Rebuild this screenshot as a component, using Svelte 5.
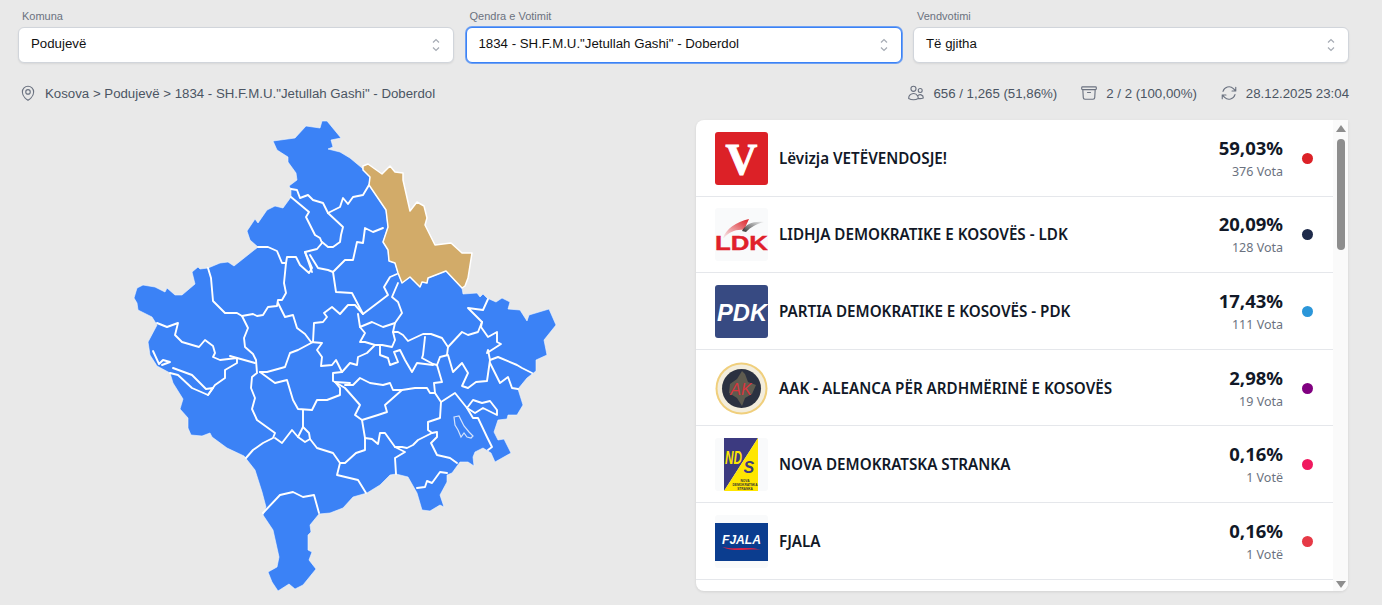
<script>
  const filters = [
    { label: 'Komuna', value: 'Podujevë', focus: false },
    { label: 'Qendra e Votimit', value: '1834 - SH.F.M.U."Jetullah Gashi" - Doberdol', focus: true },
    { label: 'Vendvotimi', value: 'Të gjitha', focus: false }
  ];
  const parties = [
    { id: 'v', name: 'Lëvizja VETËVENDOSJE!', pct: '59,03%', votes: '376 Vota', color: '#dc2127' },
    { id: 'ldk', name: 'LIDHJA DEMOKRATIKE E KOSOVËS - LDK', pct: '20,09%', votes: '128 Vota', color: '#1e2a4a' },
    { id: 'pdk', name: 'PARTIA DEMOKRATIKE E KOSOVËS - PDK', pct: '17,43%', votes: '111 Vota', color: '#2b96d9' },
    { id: 'aak', name: 'AAK - ALEANCA PËR ARDHMËRINË E KOSOVËS', pct: '2,98%', votes: '19 Vota', color: '#800080' },
    { id: 'nds', name: 'NOVA DEMOKRATSKA STRANKA', pct: '0,16%', votes: '1 Votë', color: '#f0195f' },
    { id: 'fjala', name: 'FJALA', pct: '0,16%', votes: '1 Votë', color: '#e63946' }
  ];
  const outline = 'M273 141L295 138L306 126L320 128L322 121L327 121L341 138L331 140L333 147L328 149L340 152L350 158L362 168L370 177L369 185L386 210L388 227L383 242L388 250L389 261L395 263L398 273L402 283L410 277L420 287L422 282L427 283L428 278L446 271L462 288L463 294L477 293L480 297L483 294L487 298L496 302L502 298L510 302L508 309L520 310L527 321L529 315L549 309L556 325L544 340L547 355L536 360L536 371L527 378L518 389L523 405L517 415L508 415L507 419L498 420L494 432L498 440L504 439L511 453L495 462L491 453L483 448L475 452L473 457L474 466L468 462L460 462L452 473L447 475L447 482L440 495L444 507L440 505L430 511L422 510L417 493L408 477L396 474L390 475L380 485L367 493L353 497L343 508L330 513L319 514L310 525L311 532L308 535L308 550L312 552L309 560L316 569L303 585L295 589L289 584L278 591L272 582L268 572L277 567L279 557L273 530L263 515L266 507L262 492L255 470L244 456L227 448L212 437L210 433L202 436L191 435L188 428L188 418L180 409L183 399L173 383L170 373L157 366L150 355L148 342L157 325L152 317L138 310L137 303L134 298L137 288L143 285L155 287L165 292L167 288L175 295L182 295L195 284L192 272L198 267L200 269L208 268L220 263L228 262L234 266L258 247L250 240L247 231L255 219L258 223L267 210L275 206L283 208L291 197L291 189L289 186L297 180L296 173L288 162L288 157L277 150Z';
  const tan = 'M363 166L368 164L382 174L390 166L395 172L403 173L403 180L410 211L417 202L424 206L427 218L425 225L435 245L451 243L462 253L472 253L468 278L465 286L462 288L446 271L428 278L427 283L422 282L420 287L410 277L402 283L398 273L395 263L389 261L388 250L383 242L388 227L386 210L369 185L370 177L363 170Z';
  const borders = [
    'M291 197L309 212L306 217L315 235L320 238L322 243L317 249L305 252L312 272',
    'M258 247L268 247L277 251L282 263L286 263L287 257L296 257L300 265L309 273L312 268L305 252',
    'M286 263L284 283L286 293L282 300L278 300L277 306L268 307L263 315L257 316L253 314L242 316L237 313L225 313L213 301L211 278L208 268',
    'M278 303L285 317L293 315L297 328L305 334L311 342L322 343L317 350L322 357L321 366L332 365L336 360L342 372L333 373L333 381L335 382',
    'M313 342L314 323L323 322L327 317L324 313L332 307L340 314L348 305L355 305L363 314',
    'M242 316L248 328L244 338L245 347L253 354L256 360L257 373L252 377L251 388L255 398L252 409L257 420L275 433L273 438L263 443L253 450L246 458',
    'M157 323L167 327L178 323L175 335L182 342L199 347L205 340L213 346L215 353L213 357L220 360L237 358L237 363L225 370L225 378L215 385L208 395L192 388L178 375L170 373',
    'M162 365L170 362L163 360L159 364L153 351',
    'M173 368L192 375L202 385L206 389L213 388L208 395',
    'M230 356L255 363',
    'M260 372L267 372L285 367L290 353L298 350L313 342',
    'M260 372L275 383L287 380L293 400L298 409L312 410L317 400L327 400L340 395L340 388L335 382L350 383',
    'M303 410L303 427L298 437L292 430L282 443L275 438',
    'M303 427L309 433L310 439L305 442L298 437',
    'M310 439L317 448L333 453L340 463L337 475L358 480L366 493',
    'M263 513L280 495L293 492L303 497L314 495L319 513',
    'M340 463L345 463L356 453L365 450L365 438L372 439L378 444L380 433L385 433L395 447L405 452L395 458L396 474',
    'M365 438L362 420L355 415L360 405L345 388L335 382',
    'M362 420L378 415L387 412L385 405L402 390L393 390L390 383L383 385L370 383L360 378L353 385L345 385',
    'M402 390L415 388L427 388L430 393L435 393L441 402L455 393L467 408L473 418L478 418L487 437L492 447L488 450',
    'M441 402L440 418L428 422L428 430L432 433L418 440L413 445L407 448L402 447L395 447',
    'M432 433L437 432L437 437L431 443L437 455L450 458L457 463',
    'M447 473L440 472L432 483L427 481L425 487L417 488',
    'M435 393L434 383L442 382L437 365L440 357L448 355L453 372L462 363L468 373L462 386L468 388L476 382L487 381L490 360L488 350L487 353L501 344L497 342L497 332L488 337L481 327L482 322',
    'M490 360L498 357L517 365L522 368L532 373',
    'M490 363L500 383L508 377L512 388L518 389',
    'M467 408L473 400L482 403L490 401L497 410L497 415L483 408L475 413L467 408',
    'M369 185L363 195L353 197L348 204L343 198L340 207L328 213L343 227L341 235L340 242L333 247L328 247L322 242',
    'M291 189L297 190L300 198L308 195L313 200L323 203L328 213',
    'M383 228L373 232L365 228L363 243L357 242L353 260L345 260L333 272L328 270L318 268L310 255',
    'M333 272L336 292L352 293L363 314L388 295L384 287L390 277L397 274',
    'M398 283L392 297L398 302L402 313L395 323L383 327L372 322L360 327L358 314',
    'M395 323L393 332L398 332L403 335L408 341L423 334L431 334L442 338L448 347L462 332L468 335L478 332L482 322L468 308L483 310L488 299',
    'M425 337L423 355L422 358L433 364L437 365',
    'M448 347L447 355',
    'M393 332L395 340L392 347L382 345L375 345L365 342L360 342L365 333L360 327',
    'M380 345L380 355L388 358L390 365L398 362L394 352L400 350L405 360L412 372L417 363L433 365',
    'M342 372L350 363L357 365L358 357L367 353L375 345'
  ];
</script>

<main class="page">
  <section class="filters">
    {#each filters as f}
      <div class="field">
        <span class="label">{f.label}</span>
        <div class="select" class:focus={f.focus}>
          <span class="value">{f.value}</span>
          <svg class="chev" viewBox="0 0 10 16" width="10" height="16"><path d="M2 5.5L5 2.5L8 5.5M2 10.5L5 13.5L8 10.5" fill="none" stroke="#a6abb4" stroke-width="1.2"/></svg>
        </div>
      </div>
    {/each}
  </section>

  <section class="info">
    <div class="stat">
      <svg class="icon" viewBox="0 0 24 24"><path d="M15 10.5a3 3 0 1 1-6 0 3 3 0 0 1 6 0Z"/><path d="M19.5 10.5c0 7.142-7.5 11.25-7.5 11.25S4.5 17.642 4.5 10.5a7.5 7.5 0 1 1 15 0Z"/></svg>
      <span>Kosova &gt; Podujevë &gt; 1834 - SH.F.M.U."Jetullah Gashi" - Doberdol</span>
    </div>
    <div class="stats">
      <div class="stat">
        <svg class="icon" viewBox="0 0 24 24"><path d="M15 19.128a9.38 9.38 0 0 0 2.625.372 9.337 9.337 0 0 0 4.121-.952 4.125 4.125 0 0 0-7.533-2.493M15 19.128v-.003c0-1.113-.285-2.16-.786-3.07M15 19.128v.106A12.318 12.318 0 0 1 8.624 21c-2.331 0-4.512-.645-6.374-1.766l-.001-.109a6.375 6.375 0 0 1 11.964-3.07M12 6.375a3.375 3.375 0 1 1-6.75 0 3.375 3.375 0 0 1 6.75 0Zm8.25 2.25a2.625 2.625 0 1 1-5.25 0 2.625 2.625 0 0 1 5.25 0Z"/></svg>
        <span>656 / 1,265 (51,86%)</span>
      </div>
      <div class="stat">
        <svg class="icon" viewBox="0 0 24 24"><path d="m20.25 7.5-.625 10.632a2.25 2.25 0 0 1-2.247 2.118H6.622a2.25 2.25 0 0 1-2.247-2.118L3.75 7.5M10 11.25h4M3.375 7.5h17.25c.621 0 1.125-.504 1.125-1.125v-1.5c0-.621-.504-1.125-1.125-1.125H3.375c-.621 0-1.125.504-1.125 1.125v1.5c0 .621.504 1.125 1.125 1.125Z"/></svg>
        <span>2 / 2 (100,00%)</span>
      </div>
      <div class="stat">
        <svg class="icon" viewBox="0 0 24 24"><path d="M16.023 9.348h4.992M2.985 19.644v-4.992m0 0h4.992m-4.993 0 3.181 3.183a8.25 8.25 0 0 0 13.803-3.7M4.031 9.865a8.25 8.25 0 0 1 13.803-3.7l3.181 3.182m0-4.991v4.99"/></svg>
        <span>28.12.2025 23:04</span>
      </div>
    </div>
  </section>

  <section class="content">
    <svg class="map" viewBox="18 120 678 475" width="678" height="475">
      <path d={outline} fill="#3b82f6" stroke="#f4f8ff" stroke-width="0.6" stroke-linejoin="round"/>
      {#each borders as d}
        <path {d} fill="none" stroke="#fff" stroke-width="1.9" stroke-linejoin="round" stroke-linecap="round"/>
      {/each}
      <path d="M454 417L459 416L462 422L464 426L469 432L473 436L471 438L467 437L464 433L461 437L458 430L455 425Z" fill="none" stroke="#d5e3fc" stroke-width="1.2"/>
      <path d={tan} fill="#d2ab69" stroke="#fff" stroke-width="1.5" stroke-linejoin="round"/>
    </svg>

    <div class="card">
      <ul class="list">
        {#each parties as p}
          <li class="row">
            <svg class="logo" viewBox="0 0 53 53" width="53" height="53">
              {#if p.id === 'v'}
                <rect width="53" height="53" rx="3" fill="#dc2127"/>
                <text x="26.5" y="42" text-anchor="middle" class="lv">V</text>
              {:else if p.id === 'ldk'}
                <defs>
                  <linearGradient id="lr" x1="0" y1="1" x2="1" y2="0"><stop offset="0" stop-color="#dc2127" stop-opacity=".05"/><stop offset="1" stop-color="#dc2127"/></linearGradient>
                  <linearGradient id="lg" x1="0" y1="1" x2="1" y2="0"><stop offset="0" stop-color="#333"/><stop offset="1" stop-color="#333" stop-opacity=".05"/></linearGradient>
                </defs>
                <rect width="53" height="53" rx="3" fill="#f9fafb"/>
                <path d="M8 30C11 21 21 14 34 11L29 22C21 21 14 24 9 30Z" fill="url(#lr)"/>
                <path d="M27 23C31 16 38 13 49 14C41 16 36 19 31 24Z" fill="url(#lg)"/>
                <text x="0" y="42" textLength="53" lengthAdjust="spacingAndGlyphs" class="ll">LDK</text>
              {:else if p.id === 'pdk'}
                <rect width="53" height="53" rx="3" fill="#374a82"/>
                <text x="2" y="36" textLength="50" lengthAdjust="spacingAndGlyphs" class="lp">PDK</text>
              {:else if p.id === 'aak'}
                <circle cx="26.5" cy="26.5" r="26" fill="#f0cf7c"/>
                <circle cx="26.5" cy="26.5" r="24" fill="#f3eddc"/>
                <circle cx="26.5" cy="26.5" r="19.5" fill="#2b3140"/>
                <path d="M15 22L22 17L27 9L30 12L33 20L41 23L37 32L30 36L27 44L22 36L14 31Z" fill="#5e5b4f"/>
                <text x="26" y="33" text-anchor="middle" class="la">AK</text>
              {:else if p.id === 'nds'}
                <rect width="53" height="53" rx="3" fill="#f9fafb"/>
                <path d="M9 0H43L9 53Z" fill="#3c3a80"/>
                <path d="M43 0V53H9Z" fill="#ffe600"/>
                <text x="10" y="26" textLength="17" lengthAdjust="spacingAndGlyphs" class="ln1">ND</text>
                <text x="28.5" y="35" class="ln2">S</text>
                <text x="30" y="44" text-anchor="middle" class="ln3">NOVA</text>
                <text x="30" y="48" text-anchor="middle" class="ln3">DEMOKRATSKA</text>
                <text x="30" y="52" text-anchor="middle" class="ln3">STRANKA</text>
              {:else}
                <rect width="53" height="53" rx="3" fill="#f9fafb"/>
                <rect y="8" width="53" height="38" fill="#0b3d8f"/>
                <text x="7" y="29" textLength="39" lengthAdjust="spacingAndGlyphs" class="lf">FJALA</text>
                <path d="M7 32C20 35 35 31 46 35C35 33 20 38 7 32Z" fill="#d6224a"/>
              {/if}
            </svg>
            <span class="name">{p.name}</span>
            <div class="nums">
              <span class="pct">{p.pct}</span>
              <span class="votes">{p.votes}</span>
            </div>
            <span class="dot" style:background={p.color}></span>
          </li>
        {/each}
      </ul>
      <div class="scrollbar">
        <span class="arrow up"></span>
        <span class="thumb"></span>
        <span class="arrow down"></span>
      </div>
    </div>
  </section>
</main>

<style>
  :global(body) {
    margin: 0;
    background: #e9e9e9;
    overflow: hidden;
  }
  .page {
    box-sizing: border-box;
    width: 1382px;
    height: 605px;
    padding: 10px 33px 0 18px;
    font-family: "Liberation Sans", Arial, sans-serif;
    overflow: hidden;
  }
  .filters {
    display: grid;
    grid-template-columns: repeat(3, 1fr);
    column-gap: 11.5px;
  }
  .field {
    display: flex;
    flex-direction: column;
  }
  .label {
    font-size: 11px;
    line-height: 13px;
    color: #6b7280;
    padding: 0 0 4px 4px;
  }
  .select {
    box-sizing: border-box;
    height: 36px;
    display: flex;
    align-items: center;
    justify-content: space-between;
    padding: 0 12px;
    background: #fff;
    border: 1px solid #d1d5db;
    border-radius: 6px;
    box-shadow: 0 1px 2px rgba(0, 0, 0, 0.08);
    font-size: 13.25px;
    color: #111;
  }
  .value {
    padding-bottom: 3px;
  }
  .select.focus {
    border-color: #3b82f6;
    box-shadow: 0 0 0 1px rgba(59, 130, 246, 0.7);
  }
  .chev {
    flex: none;
  }
  .info {
    display: flex;
    justify-content: space-between;
    align-items: center;
    height: 24px;
    margin-top: 18px;
    font-size: 13.25px;
    color: #4b5563;
  }
  .stats {
    display: flex;
    gap: 23px;
  }
  .stat {
    display: flex;
    align-items: center;
    gap: 8px;
  }
  .icon {
    width: 18px;
    height: 18px;
    fill: none;
    stroke: #6b7280;
    stroke-width: 1.5;
    stroke-linecap: round;
    stroke-linejoin: round;
    flex: none;
  }
  .stat:first-child > .icon {
    margin-left: 1px;
  }
  .content {
    display: flex;
    margin-top: 15px;
  }
  .map {
    flex: none;
    display: block;
  }
  .card {
    flex: 1;
    height: 471px;
    margin-right: 1px;
    display: flex;
    background: #fff;
    border-radius: 8px 0 8px 8px;
    box-shadow: 0 1px 3px rgba(0, 0, 0, 0.1);
    overflow: hidden;
  }
  .list {
    flex: 1;
    margin: 0;
    padding: 0;
    list-style: none;
    font-family: "Noto Sans", "Open Sans", sans-serif;
  }
  .row {
    box-sizing: border-box;
    height: 76.6px;
    display: flex;
    align-items: center;
    padding: 1px 20px 0 19px;
    border-bottom: 1px solid #e5e7eb;
  }
  .logo {
    flex: none;
    display: block;
    margin-right: 11px;
  }
  .name {
    flex: 1;
    font-size: 15.2px;
    font-weight: 600;
    color: #111827;
    padding-bottom: 1px;
  }
  .nums {
    display: flex;
    flex-direction: column;
    align-items: flex-end;
    margin-right: 19px;
    padding-bottom: 1px;
  }
  .pct {
    font-size: 18.5px;
    line-height: 24px;
    font-weight: 700;
    color: #111827;
  }
  .votes {
    font-size: 12.5px;
    line-height: 16px;
    margin-top: 4px;
    color: #6b7280;
  }
  .dot {
    width: 11px;
    height: 11px;
    border-radius: 50%;
    flex: none;
  }
  .scrollbar {
    flex: none;
    width: 15px;
    background: #fafafa;
    display: flex;
    flex-direction: column;
    align-items: center;
    justify-content: space-between;
    position: relative;
    padding: 5px 0 3px;
    box-sizing: border-box;
  }
  .thumb {
    position: absolute;
    top: 19px;
    left: 4px;
    width: 8px;
    height: 111px;
    border-radius: 4px;
    background: #8d8d8d;
  }
  .arrow {
    width: 0;
    height: 0;
    border-left: 5px solid transparent;
    border-right: 5px solid transparent;
  }
  .arrow.up {
    border-bottom: 7px solid #8d8d8d;
  }
  .arrow.down {
    border-top: 7px solid #8d8d8d;
  }
  .lv {
    font: 700 44px "Liberation Serif", serif;
    fill: #fff;
    stroke: #fff;
    stroke-width: 1;
  }
  .ll {
    font: 700 20px "Liberation Sans", sans-serif;
    fill: #e0202a;
    stroke: #e0202a;
    stroke-width: 0.4;
  }
  .lp {
    font: italic 700 24px "Liberation Sans", sans-serif;
    fill: #fff;
  }
  .la {
    font: italic 400 16px "Liberation Sans", sans-serif;
    fill: #d9363e;
  }
  .ln1 {
    font: italic 700 19px "Liberation Sans", sans-serif;
    fill: #ffe600;
  }
  .ln2 {
    font: italic 700 16px "Liberation Sans", sans-serif;
    fill: #3c3a80;
  }
  .ln3 {
    font: 700 3.2px "Liberation Sans", sans-serif;
    fill: #333;
  }
  .lf {
    font: italic 700 12.5px "Liberation Sans", sans-serif;
    fill: #fff;
  }
</style>
